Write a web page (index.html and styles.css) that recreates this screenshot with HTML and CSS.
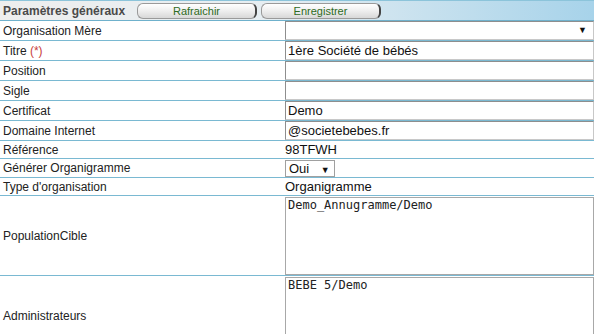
FILE: index.html
```html
<!DOCTYPE html>
<html lang="fr">
  <head>
    <meta charset="UTF-8" />
    <title>Paramètres généraux</title>
    <link rel="stylesheet" href="styles.css">
  </head>
  <body>
    <!-- barre de titre -->
    <div class="titlebar">
      <span class="title">Paramètres généraux</span>
      <span class="btn">Rafraichir</span>
      <span class="btn">Enregistrer</span>
    </div>
    <!-- formulaire -->
    <table class="form">
      <tr class="row">
        <td class="lbl">Organisation Mère</td>
        <td class="val"><div class="field select-full"><span></span><span class="arrow">▼</span></div></td>
      </tr>
      <tr class="row">
        <td class="lbl">Titre <span class="req">(*)</span></td>
        <td class="val"><div class="field">1ère Société de bébés</div></td>
      </tr>
      <tr class="row">
        <td class="lbl">Position</td>
        <td class="val"><div class="field"></div></td>
      </tr>
      <tr class="row">
        <td class="lbl">Sigle</td>
        <td class="val"><div class="field"></div></td>
      </tr>
      <tr class="row">
        <td class="lbl">Certificat</td>
        <td class="val"><div class="field">Demo</div></td>
      </tr>
      <tr class="row">
        <td class="lbl">Domaine Internet</td>
        <td class="val"><div class="field">@societebebes.fr</div></td>
      </tr>
      <tr class="row small">
        <td class="lbl">Référence</td>
        <td class="val"><div class="plain">98TFWH</div></td>
      </tr>
      <tr class="row small">
        <td class="lbl">Générer Organigramme</td>
        <td class="val"><div class="select-small">Oui <span class="arrow">▼</span></div></td>
      </tr>
      <tr class="row small">
        <td class="lbl">Type d'organisation</td>
        <td class="val"><div class="plain">Organigramme</div></td>
      </tr>
      <tr class="row big">
        <td class="lbl">PopulationCible</td>
        <td class="val"><div class="area">Demo_Annugramme/Demo</div></td>
      </tr>
      <tr class="row big last">
        <td class="lbl">Administrateurs</td>
        <td class="val"><div class="area">BEBE 5/Demo</div></td>
      </tr>
    </table>
  </body>
</html>
```
FILE: styles.css
```css
/* page */
body {
  margin: 0;
  font-family: "Liberation Sans", Tahoma, Arial, sans-serif;
  font-size: 12px;
  color: #222;
  background: #fff;
  overflow: hidden;
}

/* barre de titre avec les boutons */
.titlebar {
  height: 19px;
  border-top: 1px solid #8cc4da;
  border-bottom: 1px solid #6fb1cc;
  background: linear-gradient(to right, #eeeeee 0%, #e6eef2 45%, #a7d3ea 100%);
  display: flex;
  align-items: center;
  padding-left: 3px;
}
.title {
  font-weight: bold;
  color: #4a4a4a;
  font-size: 12px;
  width: 134px;
}
.btn {
  width: 117px;
  height: 14px;
  margin-right: 4px;
  border: 1px solid #9a9a9a;
  border-right: 2px solid #444;
  border-radius: 6px;
  background: linear-gradient(to bottom, #ffffff 0%, #eeeeee 50%, #d8d8d8 100%);
  color: #2e6b24;
  font-family: "Liberation Sans", Arial, sans-serif;
  font-size: 11px;
  line-height: 14px;
  text-align: center;
}

/* tableau du formulaire */
.form {
  width: 594px;
  border-collapse: collapse;
  border-spacing: 0;
}
.row td {
  height: 19px;
  padding: 0;
  border-bottom: 1px solid #7ab9d2;
}
.row.small td {
  height: 17px;
}
.row.big td {
  height: 78px;
}
.row.last td {
  height: 76px;
  border-bottom: none;
}
.lbl {
  width: 282px;
  padding-left: 3px !important;
  vertical-align: middle;
}
.req {
  color: #c83c3c;
}
.val {
  vertical-align: top;
}

/* champs */
.field {
  height: 17px;
  border: 1px solid #c8c8c8;
  border-top-color: #8e8e8e;
  border-left-color: #8e8e8e;
  font-family: "Liberation Sans", Arial, sans-serif;
  font-size: 13px;
  line-height: 17px;
  padding-left: 2px;
  color: #111;
}
.select-full {
  display: flex;
  justify-content: space-between;
  padding-right: 6px;
}
.arrow {
  font-size: 9px;
  color: #111;
}
.plain {
  font-family: "Liberation Sans", Arial, sans-serif;
  font-size: 13px;
  line-height: 17px;
  color: #111;
}
.select-small {
  width: 45px;
  height: 15px;
  margin-top: 1px;
  border: 1px solid #a0a0a0;
  font-family: "Liberation Sans", Arial, sans-serif;
  font-size: 13px;
  line-height: 15px;
  padding-left: 3px;
  color: #111;
}
.select-small .arrow {
  margin-left: 8px;
}
.area {
  height: 74px;
  margin-top: 1px;
  border: 1px solid #a8a8a8;
  font-family: "DejaVu Sans Mono", monospace;
  font-size: 12px;
  line-height: 12px;
  padding: 1px 2px 1px;
  color: #222;
}
```
